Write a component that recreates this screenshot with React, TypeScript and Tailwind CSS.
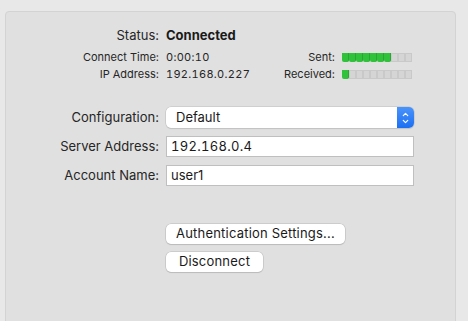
import { ChevronUp, ChevronDown } from "lucide-react";

function Meter({ lit }: { lit: number }) {
  return (
    <div className="flex">
      {Array.from({ length: 10 }).map((_, i) =>
        i < lit ? (
          <div
            key={i}
            className="w-[7px] h-[9px] bg-[#2fc23a] border-r border-[#27a832] rounded-b-[2px]"
          />
        ) : (
          <div
            key={i}
            className="w-[7px] h-[9px] bg-[#d5d5d5] border border-[#c9c9c9]"
          />
        )
      )}
    </div>
  );
}

function InfoRow({
  label,
  value,
  sideLabel,
  lit,
}: {
  label: string;
  value: string;
  sideLabel: string;
  lit: number;
}) {
  return (
    <div className="flex items-center h-[17px] text-[11px] text-[#262626]">
      <div className="w-[153px] text-right">{label}</div>
      <div className="ml-[7px] w-[110px] tabular-nums tracking-[0.3px]">{value}</div>
      <div className="w-[59px] text-right">{sideLabel}</div>
      <div className="ml-[7px]">
        <Meter lit={lit} />
      </div>
    </div>
  );
}

function FieldRow({ label, children }: { label: string; children: React.ReactNode }) {
  return (
    <div className="flex items-center h-[21px]">
      <div className="w-[153px] text-right text-[13px] text-[#262626]">{label}</div>
      <div className="ml-[7px] w-[248px] h-full">{children}</div>
    </div>
  );
}

export default function App() {
  return (
    <div
      className="w-[468px] h-[321px] overflow-hidden bg-[#e8e8e8] pt-[11px] pl-[5px]"
      style={{ fontFamily: 'Inter, "Liberation Sans", Arial, sans-serif' }}
    >
      <div className="w-[451px] h-[330px] bg-[#e0e0e0] border border-[#d3d3d3] rounded-t-[4px] pt-[16px]">
        <div className="flex items-center h-[16px]">
          <div className="w-[153px] text-right text-[13px] text-[#262626]">Status:</div>
          <div className="ml-[7px] text-[13px] font-bold text-[#1a1a1a]">Connected</div>
        </div>

        <div className="mt-[5px]">
          <InfoRow label="Connect Time:" value="0:00:10" sideLabel="Sent:" lit={7} />
          <InfoRow label="IP Address:" value="192.168.0.227" sideLabel="Received:" lit={1} />
        </div>

        <div className="mt-[24px] flex flex-col gap-[8px]">
          <FieldRow label="Configuration:">
            <div className="flex h-full rounded-[5px] bg-white shadow-[0_0_0_0.5px_#bdbdbd,0_1px_1px_rgba(0,0,0,0.12)]">
              <div className="flex-1 pl-[10px] text-[13px] leading-[21px] text-[#1a1a1a]">
                Default
              </div>
              <div className="w-[17px] h-full rounded-r-[5px] bg-gradient-to-b from-[#4a93fa] to-[#1b6ff2] flex flex-col items-center justify-center text-white">
                <ChevronUp size={9} strokeWidth={3} className="-mb-[1px]" />
                <ChevronDown size={9} strokeWidth={3} className="-mt-[1px]" />
              </div>
            </div>
          </FieldRow>
          <FieldRow label="Server Address:">
            <div className="h-full bg-white border border-[#bfbfbf] pl-[4px] text-[13px] leading-[19px] text-[#1a1a1a] tabular-nums tracking-[0.3px]">
              192.168.0.4
            </div>
          </FieldRow>
          <FieldRow label="Account Name:">
            <div className="h-full bg-white border border-[#bfbfbf] pl-[4px] text-[13px] leading-[19px] text-[#1a1a1a]">
              user1
            </div>
          </FieldRow>
        </div>

        <div className="mt-[38px] ml-[160px] flex flex-col items-start gap-[8px]">
          <button className="w-[179px] h-[20px] rounded-[5px] bg-white text-[13px] tracking-[0.2px] text-[#1a1a1a] shadow-[0_0_0_0.5px_#b8b8b8,0_1px_1px_rgba(0,0,0,0.15)]">
            Authentication Settings...
          </button>
          <button className="w-[97px] h-[20px] rounded-[5px] bg-white text-[13px] tracking-[0.2px] text-[#1a1a1a] shadow-[0_0_0_0.5px_#b8b8b8,0_1px_1px_rgba(0,0,0,0.15)]">
            Disconnect
          </button>
        </div>
      </div>
    </div>
  );
}
